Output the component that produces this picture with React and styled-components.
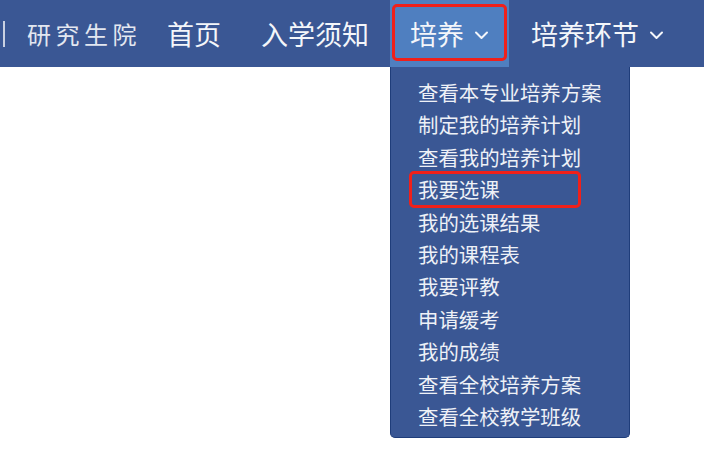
import React from 'react';
import styled, { createGlobalStyle } from 'styled-components';

const GlobalStyle = createGlobalStyle`
  html, body {
    margin: 0;
    padding: 0;
    background: #ffffff;
  }
  body {
    font-family: 'Noto Sans CJK SC', sans-serif;
  }
  #root {
    min-height: 100vh;
  }
`;

const Page = styled.div`
  min-height: 468px;
  background: #ffffff;
`;

const NavBar = styled.nav`
  display: flex;
  align-items: stretch;
  height: 67px;
  background-color: #3a5794;
  color: #f4f6fa;
`;

const Brand = styled.div`
  display: flex;
  align-items: center;
  padding-left: 3px;
  width: 144px;
  flex-shrink: 0;
`;

const Divider = styled.span`
  width: 2px;
  height: 26px;
  margin-right: 22px;
  background-color: #c9d1e2;
`;

const BrandText = styled.span`
  font-size: 24px;
  letter-spacing: 4.5px;
  color: #e3e7f0;
  white-space: nowrap;
`;

const NavItem = styled.div`
  position: relative;
  display: flex;
  align-items: center;
  gap: 10px;
  padding: 0 20px;
  margin-right: ${(p) => p.$gap || 0}px;
  font-size: 27px;
  white-space: nowrap;
  background-color: ${(p) => (p.$active ? '#4f7fc0' : 'transparent')};

  ${(p) =>
    p.$active &&
    `
    &::after {
      content: '';
      position: absolute;
      left: 2px;
      right: 2px;
      top: 4px;
      bottom: 6px;
      border: 3px solid #f0201a;
      border-radius: 5px;
      box-sizing: border-box;
    }
  `}
`;

const Chevron = () => (
  <svg width="15" height="9" viewBox="0 0 15 9" style={{ marginTop: 4 }}>
    <polyline
      points="2,1.5 7.5,7 13,1.5"
      fill="none"
      stroke="currentColor"
      strokeWidth="2"
      strokeLinecap="round"
      strokeLinejoin="round"
    />
  </svg>
);

const Dropdown = styled.ul`
  position: absolute;
  top: 100%;
  left: 0;
  width: 240px;
  margin: 0;
  padding: 9px 0 5px;
  list-style: none;
  box-sizing: border-box;
  background-color: #3a5794;
  border: 1px solid #1f3d7a;
  border-top: none;
  border-radius: 0 0 5px 5px;
  z-index: 10;
`;

const MenuItem = styled.li`
  position: relative;
  padding-left: 27px;
  font-size: 20.4px;
  line-height: 32.4px;
  color: #eef1f7;

  ${(p) =>
    p.$marked &&
    `
    &::after {
      content: '';
      position: absolute;
      left: 18px;
      width: 172px;
      top: -2px;
      bottom: -2px;
      border: 3px solid #f0201a;
      border-radius: 5px;
      box-sizing: border-box;
    }
  `}
`;

const menu = [
  '查看本专业培养方案',
  '制定我的培养计划',
  '查看我的培养计划',
  '我要选课',
  '我的选课结果',
  '我的课程表',
  '我要评教',
  '申请缓考',
  '我的成绩',
  '查看全校培养方案',
  '查看全校教学班级',
];

const App = () => (
  <Page>
    <GlobalStyle />
    <NavBar>
      <Brand>
        <Divider />
        <BrandText>研究生院</BrandText>
      </Brand>
      <NavItem>首页</NavItem>
      <NavItem $gap={1}>入学须知</NavItem>
      <NavItem $active $gap={2}>
        培养
        <Chevron />
        <Dropdown>
          {menu.map((m) => (
            <MenuItem key={m} $marked={m === '我要选课'}>
              {m}
            </MenuItem>
          ))}
        </Dropdown>
      </NavItem>
      <NavItem>
        培养环节
        <Chevron />
      </NavItem>
    </NavBar>
  </Page>
);

export default App;
